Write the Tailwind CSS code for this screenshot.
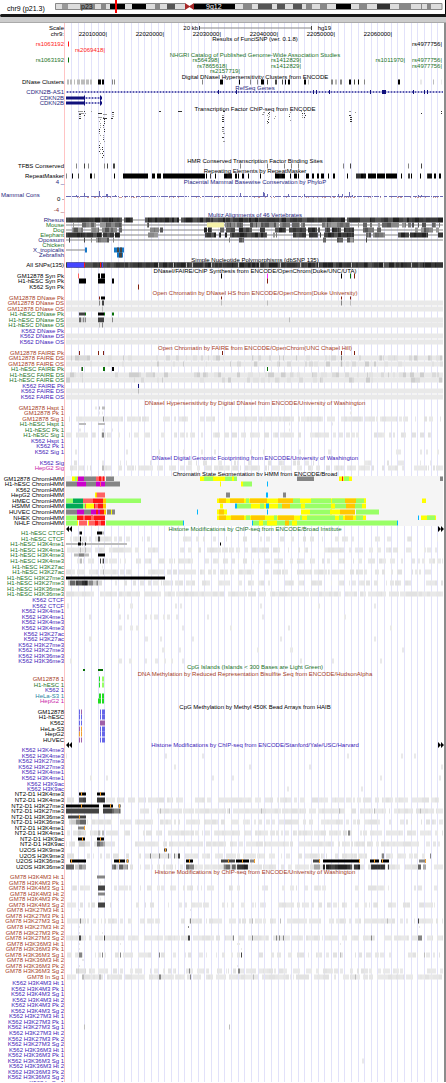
<!DOCTYPE html>
<html lang="en">
<head>
<meta charset="utf-8">
<meta name="viewport" content="width=device-width, initial-scale=1">
<title>chr9 (p21.3) genome browser</title>
<script src="https://cdn.jsdelivr.net/npm/@tailwindcss/browser@4"></script>
</head>
<body class="bg-white font-['Liberation_Sans',Arial,sans-serif] text-black">
<main class="overflow-clip">
  <header class="flex h-[14px] items-start border-r border-black pr-[2px] pl-[7px]">
    <h1 class="w-[48px] shrink-0 pt-[4px] text-[7px] leading-[9px] whitespace-nowrap">chr9 (p21.3)</h1>
    <svg id="ideogram" class="h-[14px] min-w-0 flex-1" viewBox="55 0 388 14" preserveAspectRatio="none" role="img" aria-label="Chromosome 9 ideogram"></svg>
  </header>
  <div class="h-[3px] rounded-l-full bg-[#181818]"></div>
  <div class="h-[6px] border-b border-[#aaaaaa] bg-[#cccccc]"></div>
  <div class="relative border-r-2 border-[#8c8c8c]">
    <svg id="grid" class="absolute inset-y-0 right-0 left-[64px] h-full w-[calc(100%-64px)]" viewBox="64 0 380 100" preserveAspectRatio="none" aria-hidden="true"></svg>
    <div id="tracks" class="relative pt-[2px]"></div>
  </div>
</main>
<script>
const colors = {
  k:'#000000', d:'#444444', m:'#858585', l:'#bcbcbc', g:'#e9e9e9', f:'#f5f5f5', n:'#10107c', b:'#4646ff',
  r:'#ff1515', s:'#ff6262', o:'#ffc800', y:'#ffff00', p:'#cc00cc', v:'#00aa55', w:'#99ff66', q:'#00b7ff',
  e:'#087008', t:'#802010', c:'#f0a030', u:'#6666e8', x:'#ff30ff', i:'#1478c8', h:'#22dd22', z:'#a060a8', j:'#f5f2a8'
};
const palettes = {
  A:['#222','#333','#444','#555','#3a3a3a'], B:['#555','#777','#888','#999','#666'],
  C:['#e9e9e9','#e6e6e6','#e9e9e9','#e2e2e2'], D:['#e2e2e2','#dadada','#cecece'],
  E:['#888','#aaa','#ccc','#666'], K:['#000','#111','#000','#333']
};
let seed = 9;
const rnd = () => (seed = (seed * 16807) % 2147483647) / 2147483647;
const rect = (x, y, w, h, c) => `<rect x="${x}" y="${y}" width="${w}" height="${h}" fill="${c}"/>`;

/* "k3:98-5" draws a 3px-high black box at x 98, 5 wide; "~C:66-440-60" scatters boxes over 60% of a span */
function marks(spec) {
  if (!spec) return '';
  return spec.split(' ').map(tok => {
    const [head, body] = tok.split(':');
    if (head[0] === '~') {
      const pal = palettes[head[1]], h = +(head[2] || 5);
      const [a, b, cov] = body.split('-').map(Number);
      let out = '', x = a;
      while (x < b) {
        const w = Math.min(1 + Math.floor(rnd() * 4), b - x);
        if (rnd() * 100 < cov) out += rect(x, 3 - h / 2, w, h, pal[Math.floor(rnd() * pal.length)]);
        x += w;
      }
      return out;
    }
    const h = +(head[1] || 5);
    return body.split(',').map(p => {
      const [x, w] = p.split('-').map(Number);
      return rect(x, 3 - h / 2, w || 1, h, colors[head[0]]);
    }).join('');
  }).join('');
}
function factors() {
  const cols = [[78,111,113,5],[79,114,118,2],[84,111,115,1],[90,111,112,1],[98,111,117,4],[99,117,153,1],[102,114,118,4],[103,117,144,1],[102,145,158,1],
    [111,112,118,2],[158,111,112,2],[177,111,112,4],[222,111,142,2],[262,112,115,2],[267,111,124,1],[268,112,122,1],[274,112,119,1],[289,112,124,1],
    [301,111,118,1],[304,111,118,1],[317,111,112,1],[349,111,122,2],[354,112,113,1],[420,111,113,1],[441,111,113,1]];
  let out = '';
  for (const [x, y0, y1, w] of cols)
    for (let y = y0; y <= y1; y += 2)
      if (rnd() < .85) out += rect(x + Math.floor(rnd() * 2), y - 109, w, 1, rnd() < .5 ? '#333' : '#999');
  return out;
}
function wiggle() {
  const peaks = {76:2,84:4,99:6,106:3,107:3,115:2,240:4,263:5,264:4,267:3,288:3,304:3,338:3,342:3,349:5,352:2,418:2,421:2};
  let out = '';
  for (let x = 66; x < 443; x++) {
    const up = peaks[x] || (rnd() < .8 ? 1 : 0);
    if (up) out += rect(x, 1 - up, 1, up, '#6a6ab4');
    if (rnd() < .18) out += rect(x, 1, 1, 1, '#cc9898');
  }
  return out;
}
function gene(a, b, boxes) {
  let out = rect(a, 2.5, b - a, 1, '#7c7cc8');
  for (let x = a + 1; x < b; x += 3) out += rect(x, 2, 1, 2, '#5c5cb0');
  return out + marks(boxes);
}

const K='text-black', G='text-[#1b7328]', R='text-[#a63c1c]', P='text-[#4020b8]', N='text-[#262680]', M='text-[#c81ca8]', T='text-[#1e82a0]', X='text-[#ff2020]';
const T_ = (y, color, title, o) => ({y, color, title, ...o});
const L_ = (y, color, label, m, o) => ({y, color, label, m, ...o});
const full = 'g:66-377';
const rows = [
 L_(28,K,'Scale','m1:199-112 d4:199-1,311-1',{pins:[[198,'20 kb',K],[331,'hg19',K]]}),
 L_(34,K,'chr9:','',{pins:[[107,'22010000|',K],[164,'22020000|',K],[221,'22030000|',K],[278,'22040000|',K],[335,'22050000|',K],[392,'22060000|',K]]}),
 T_(39,K,'Results of FunciSNP (ver. 0.1.8)'),
 L_(44,X,'rs1063192','r:68-1',{pins:[[442,'rs4977756|',K]]}),
 L_(50,X,'','',{pins:[[105,'rs2069418|',X]]}),
 T_(55,G,'NHGRI Catalog of Published Genome-Wide Association Studies'),
 L_(60,G,'rs1063192','e:68-1',{pins:[[219,'rs564398|',G],[301,'rs1412829|',G],[405,'rs1011970|',G],[442,'rs4977756|',G]]}),
 L_(66,G,'','',{pins:[[227,'rs7865618|',G],[301,'rs1412829|',G],[442,'rs4977756|',G]]}),
 L_(71,G,'','',{pins:[[240,'rs2157719|',G]]}),
 T_(77,K,'Digital DNaseI Hypersensitivity Clusters from ENCODE'),
 L_(82,K,'DNase Clusters','l:67-2,70-2,74-1,77-3,81-4,86-3,90-2 k:98-3,102-2 m:112-1,114-1,202-1 k:220-3,239-1 m:250-1,257-1 k:261-3 d:267-1,275-2,282-1 k:285-1,288-2,304-2 l:308-1 m:331-2 l:335-2 m:340-2 k:349-2 d:354-1 k:358-1 m:364-1 k:398-2 g:420-2 l:433-1 g:441-1'),
 T_(88,N,'RefSeq Genes'),
 {y:92,color:N,label:'CDKN2B-AS1',draw:()=>gene(66,443,'n4:218-1,236-1,313-1,316-1,329-1,370-1,382-4,413-1,424-1,427-1')},
 {y:98,color:N,label:'CDKN2B',draw:()=>gene(85,100,'n3:66-19 n5:84-1,100-1 n3:101-1')},
 {y:103,color:N,label:'CDKN2B',draw:()=>gene(85,100,'n3:66-19 n5:84-1,100-1 n3:101-1')},
 T_(109,K,'Transcription Factor ChIP-seq from ENCODE'),
 {y:112,color:K,label:'',draw:factors},
 T_(161,K,'HMR Conserved Transcription Factor Binding Sites'),
 L_(166,K,'TFBS Conserved','m:76-1 d:84-1 m:88-1,104-1 d:107-1,113-2 m:240-1,267-1,284-1,291-1,298-1,343-1 d:350-1 m:408-1 d:421-1'),
 T_(171,K,'Repeating Elements by RepeatMasker'),
 L_(176,K,'RepeatMasker','m:66-1 k:72-1 d:78-1 k:90-2,114-1,123-25 m:94-1 k:152-3,157-4,163-42,206-1 d:210-1 k:215-1 ~K:224-232-90 k:235-2,238-1,242-2,248-1,260-1 ~K:275-285-80 k:290-1,294-3,298-1,306-3,312-2,317-2,321-3,328-1,333-2,347-1 ~K:356-366-90 k:368-8,377-8,386-11,401-1 d:408-2 k:411-1,420-1 ~K:427-432-90 k:434-2,439-2'),
 T_(182,N,'Placental Mammal Basewise Conservation by PhyloP',{label:'4 _'}),
 {y:195,color:N,label:'Mammal Cons',left:true},
 {y:199,color:K,label:'0 -',draw:wiggle},
 {y:210,color:'text-[#903030]',label:'-4 _'},
 T_(215,N,'Multiz Alignments of 46 Vertebrates'),
 L_(220,N,'Rhesus','m1:66-377 ~A:66-133-97 ~A:145-443-98'),
 L_(225,G,'Mouse','m1:66-377 ~B:69-74-80 ~B:75-122-85 ~B:147-149-90 j:207-17 ~B:225-243-95 ~B:250-305-85 ~B:322-350-85 ~B:357-375-60 ~B:378-427-75 ~B:432-440-60'),
 L_(230,G,'Dog','m1:66-377 ~B:72-90-85 ~B:91-126-80 ~B:145-163-70 ~A:204-212-80 ~B:220-224-90 ~A:226-266-70 ~A:275-320-85 ~A:325-354-85 ~B:363-384-70 ~B:415-440-75'),
 L_(235,G,'Elephant','m1:66-377 ~A:66-120-90 ~B:148-162-75 ~A:205-268-85 ~B:270-277-90 ~A:282-321-85 ~A:324-354-90 ~B:366-385-70 ~A:398-428-75 ~A:438-443-80'),
 L_(240,N,'Opossum','m1:66-377 d:69-1,84-1 ~B:91-109-95 m:113-1,229-1 ~B:239-244-90 ~B:323-326-90 ~B:337-354-75 d:366-1'),
 L_(245,G,'Chicken',''),
 L_(250,N,'X_tropicalis','m1:66-19 i:85-2,114-10 d:117-2,120-2'),
 L_(255,N,'Zebrafish','i:117-6 d:119-3'),
 T_(260,K,'Simple Nucleotide Polymorphisms (dbSNP 135)'),
 L_(265,K,'All SNPs(135)','d:66-377 ~A:66-443-100 l:158-1,173-1,186-1,192-1,211-1,238-1,259-1,280-1,300-1,318-1,351-1,383-1,411-1 b:67-17 r:84-1,100-1 b:102-1'),
 T_(271,K,'DNaseI/FAIRE/ChIP Synthesis from ENCODE/OpenChrom(Duke/UNC/UTA)'),
 L_(276,K,'GM12878 Syn Pk','s:78-1 k:98-2,101-4,221-1 x:267-1 k:341-1 e:350-1 t:354-1'),
 L_(281,K,'H1-hESC Syn Pk','k:79-7,98-7,112-2 t:267-1'),
 L_(287,K,'K562 Syn Pk','t:138-1'),
 T_(293,R,'Open Chromatin by DNaseI HS from ENCODE/OpenChrom(Duke University)'),
 L_(298,R,'GM12878 DNase Pk','t3:99-1,221-1,341-1,350-1 k3:101-4'),
 L_(303,R,'GM12878 DNase DS',full+' m:99-1 d:102-2 l:221-1,267-1 m:341-1 l:350-1'),
 L_(309,R,'GM12878 DNase OS',full+' l:102-1'),
 L_(314,G,'H1-hESC DNase Pk','d3:79-6 e3:85-1 k3:98-6 e3:104-1 e3:112-2'),
 L_(320,G,'H1-hESC DNase DS',full+' ~E:79-86-100 d:98-6 m:112-1 l:289-1'),
 L_(325,G,'H1-hESC DNase OS',full+' l:99-1 m:102-1'),
 L_(331,P,'K562 DNase Pk',''),
 L_(336,P,'K562 DNase DS',full),
 L_(342,P,'K562 DNase OS',full),
 T_(348,R,'Open Chromatin by FAIRE from ENCODE/OpenChrom(UNC Chapel Hill)'),
 L_(353,R,'GM12878 FAIRE Pk','t4:79-1,98-1,103-1,222-1,341-1,354-1'),
 L_(358,R,'GM12878 FAIRE DS',full+' ~D:66-443-30 m:341-1'),
 L_(364,R,'GM12878 FAIRE OS',full+' ~D:66-443-15 l:341-1'),
 L_(369,G,'H1-hESC FAIRE Pk','m4:81-1 e4:82-1,103-2,267-1 k4:112-2'),
 L_(375,G,'H1-hESC FAIRE DS',full+' ~D:66-443-40'),
 L_(380,G,'H1-hESC FAIRE OS',full+' ~D:66-443-25'),
 L_(386,P,'K562 FAIRE Pk','n4:138-1'),
 L_(391,P,'K562 FAIRE DS',full+' l:138-1'),
 L_(397,P,'K562 FAIRE OS',full),
 T_(403,R,'DNaseI Hypersensitivity by Digital DNaseI from ENCODE/University of Washington'),
 L_(408,R,'GM12878 Hspt 1','g3:95-2 l3:99-1,102-3 g3:222-1,350-1'),
 L_(413,R,'GM12878 Pk 1','g3:99-1,102-1,350-2'),
 L_(419,R,'GM12878 Sig 1','~C:67-150-70 m:103-1 ~C:160-215-35 ~C:229-363-90 ~C:365-441-65'),
 L_(424,G,'H1-hESC Hspt 1','l2:79-7,98-7 g3:289-1,332-1'),
 L_(430,G,'H1-hESC Pk 1','g3:79-2,102-2,112-1,289-1'),
 L_(435,G,'H1-hESC Sig 1','~C:66-120-75 m:102-2 ~C:125-220-45 ~C:224-363-75 ~C:372-441-60'),
 L_(441,P,'K562 Hspt 1',''),
 L_(446,P,'K562 Pk 1',''),
 L_(452,P,'K562 Sig 1','g:75-2,126-2,158-2,183-2,201-2,214-2,250-2,263-2,299-2,328-3,396-5,420-2,426-2,437-2'),
 T_(458,P,'DNaseI Digital Genomic Footprinting from ENCODE/University of Washington'),
 L_(463,P,'K562 Sig','~C:70-200-12 ~C:200-440-25 g:102-2'),
 L_(468,M,'HepG2 Sig','~C:66-200-75 l:102-2 ~C:200-443-65'),
 T_(474,K,'Chromatin State Segmentation by HMM from ENCODE/Broad'),
 L_(479,K,'GM12878 ChromHMM','f6:66-377 y:72-3 w:75-2 o:77-1 p:78-6 m:84-12 s:96-9 r:99-2,103-1 m:106-8 y:200-14 w:204-9,225-12 y:213-12,232-2 m:297-17 y:339-13 r:342-1 w:344-5 m:440-3'),
 L_(484,K,'H1-hESC ChromHMM','f6:66-377 m:66-11,86-10 p:77-9 m:105-15 p:96-9 s:100-1 y:241-2 w:243-9 q:267-1 y:220-1'),
 L_(490,K,'K562 ChromHMM','f6:66-377'),
 L_(495,K,'HepG2 ChromHMM','f6:66-377 y:95-1 o:96-1 s:97-8 m:226-4 q:266-2 m:283-3'),
 L_(501,K,'HMEC ChromHMM','f6:66-377 w:66-7 v:73-10 s:83-10 r:93-10 o:103-3 w:106-35 y:217-149 o:219-7,230-14,250-17,278-15 w:246-3,293-7,311-20,332-13,356-8 o:345-11 y:364-2,422-4'),
 L_(506,K,'HSMM ChromHMM','f6:66-377 v:66-17 w:83-2 s:85-1 y:86-8 r:94-1 s:95-3 r:98-5 o:103-3 y:220-3 q:235-2 w:237-14 y:251-27 q:266-3 w:260-4 o:282-8 w:278-4,290-50 y:301-4,331-4 o:346-9 w:340-6,355-7 y:362-4'),
 L_(512,K,'HUVEC ChromHMM','f6:66-377 m:66-11 p:77-7 m:84-7 p:91-5 r:96-2 p:98-2 r:100-4 o:104-2 m:107-4 y:111-1 m:112-3 q:197-1 y:217-10 o:219-5 q:267-1 y:301-9 w:310-22 y:330-10 o:340-15 w:356-23'),
 L_(518,K,'NHEK ChromHMM','f6:66-377 w:66-11 r:77-6 s:83-2 r:85-8 s:91-3 r:94-11 y:217-149 o:219-7,231-13,251-14,278-16 w:246-4,274-3,300-2,307-28,339-4,356-7 o:345-8 q:418-1 y:421-15 w:427-8'),
 L_(523,K,'NHLF ChromHMM','f6:66-377 w:66-11 y:77-1 s:79-8 y:88-1 s:89-7 r:95-3 s:98-3 r:101-4 w:106-77 q:183-1,252-1 w:253-144 y:259-4,267-10,292-5 o:285-4 q:397-1'),
 T_(529,G,'Histone Modifications by ChIP-seq from ENCODE/Broad Institute',{arrows:true}),
 L_(533,G,'H1-hESC CTCF','m3:79-1 k3:80-2,97-5 l3:102-2'),
 L_(539,G,'H1-hESC CTCF','~C:66-130-65 k:80-1 d:98-2 ~C:131-443-25'),
 L_(544,G,'H1-hESC H3K4me1','l2:66-61 k3:78-3,85-1,220-1 m3:82-1'),
 L_(550,G,'H1-hESC H3K4me1','~C:66-125-65 l:80-1,85-1 ~C:125-443-45'),
 L_(555,G,'H1-hESC H3K4me3','l3:74-15 m3:79-5 k3:98-7'),
 L_(561,G,'H1-hESC H3K4me3','~C:66-128-55 l:80-2 d:100-1,103-1 l:102-1 ~C:130-443-45'),
 L_(567,G,'H1-hESC H3K27ac','g3:102-1'),
 L_(572,G,'H1-hESC H3K27ac','~C:66-130-75 l:103-1 ~C:130-443-55'),
 L_(578,G,'H1-hESC H3K27me3','k3:66-99'),
 L_(583,G,'H1-hESC H3K27me3','~E:66-76-90 ~A:76-88-100 ~E:88-98-95 ~D:98-112-60 ~C:115-443-50'),
 L_(589,G,'H1-hESC H3K36me3',''),
 L_(594,G,'H1-hESC H3K36me3','~C:66-443-85'),
 L_(600,P,'K562 CTCF',''),
 L_(606,P,'K562 CTCF','g:67-2,118-2,130-3,175-2,180-2,260-2,318-2,374-2'),
 L_(611,P,'K562 H3K4me1',''),
 L_(617,P,'K562 H3K4me1','g:89-2,119-2,127-2,145-2,150-2,154-4,163-2,167-3,176-2,207-2,262-2,344-2'),
 L_(622,P,'K562 H3K4me3',''),
 L_(628,P,'K562 H3K4me3','g:119-3,130-3,136-3,182-2,230-2,288-2,390-2'),
 L_(634,P,'K562 H3K27ac',''),
 L_(639,P,'K562 H3K27ac','g:89-3,145-3,160-2,192-2,280-2,374-2'),
 L_(645,P,'K562 H3K27me3',''),
 L_(650,P,'K562 H3K27me3','g:162-3,179-2,257-2,290-3,402-2'),
 L_(656,P,'K562 H3K36me3',''),
 L_(661,P,'K562 H3K36me3','g:70-2,118-4,129-3,145-2,155-3,164-2,171-2,182-2,300-2,332-2,380-2'),
 T_(667,G,'CpG Islands (Islands < 300 Bases are Light Green)'),
 L_(670,G,'','e2:83-2,98-5'),
 T_(674,R,'DNA Methylation by Reduced Representation Bisulfite Seq from ENCODE/HudsonAlpha'),
 L_(679,R,'GM12878 1','h:99-1 w:102-2'),
 L_(685,G,'H1-hESC 1','h:99-1 w:102-2'),
 L_(690,P,'K562 1',''),
 L_(696,T,'HeLa-S3 1','h:99-2,102-2'),
 L_(701,M,'HepG2 1','h:98-3,102-2'),
 T_(707,K,'CpG Methylation by Methyl 450K Bead Arrays from HAIB'),
 L_(712,K,'GM12878','u:79-1,100-1,102-3 z:81-1'),
 L_(717,K,'H1-hESC','u:79-1,81-1,100-1,102-3'),
 L_(723,K,'K562','u:79-1,81-1 z:100-5'),
 L_(729,K,'HeLa-S3','z:79-1 c:81-1 u:100-1,102-3'),
 L_(734,K,'HepG2','c:79-1,81-1 u:100-1,102-3'),
 L_(740,K,'HUVEC','z:79-1,81-1 u:100-1,102-3'),
 T_(745,P,'Histone Modifications by ChIP-seq from ENCODE/Stanford/Yale/USC/Harvard',{arrows:true}),
 L_(750,P,'K562 H3K4me3',''),
 L_(756,P,'K562 H3K4me3','g:66-1,165-2,202-2,347-2,401-2,414-2'),
 L_(761,P,'K562 H3K27me3',''),
 L_(767,P,'K562 H3K27me3','g:174-2,249-2,309-2,441-2'),
 L_(772,P,'K562 H3K4me1',''),
 L_(778,P,'K562 H3K4me1','g:90-2,106-2,212-2,232-2,380-2,439-2'),
 L_(784,P,'K562 H3K9ac',''),
 L_(789,P,'K562 H3K9ac','g:287-2,361-2'),
 L_(794,K,'NT2-D1 H3K4me3','k3:79-7,97-8 c4:81-1,100-1'),
 L_(800,K,'NT2-D1 H3K4me3','~C:66-78-70 ~A:79-86-100 ~A:97-105-100 ~C:106-443-80'),
 L_(806,K,'NT2-D1 H3K27me3','k3:66-33,103-10 c4:81-1,110-1 m3:118-3 c4:119-1'),
 L_(811,K,'NT2-D1 H3K27me3','d:66-33,103-9 ~E:112-121-95 ~C:140-443-85 l:160-1,229-1,261-1,339-1,374-1,420-1'),
 L_(817,K,'NT2-D1 H3K36me3','d3:68-18 c4:79-1'),
 L_(822,K,'NT2-D1 H3K36me3','~D:67-76-80 ~E:76-86-95 ~C:86-443-65'),
 L_(828,K,'NT2-D1 H3K4me1','m3:78-7 c4:84-1'),
 L_(833,K,'NT2-D1 H3K4me1','~C:66-130-65 ~D:78-86-80 l:98-2,102-2 ~C:143-443-75 m:348-2'),
 L_(839,K,'NT2-D1 H3K9ac','k3:78-7,97-7 c4:82-1,100-1'),
 L_(844,K,'NT2-D1 H3K9ac','~C:66-130-50 ~E:79-85-95 ~E:97-105-95 ~C:135-443-80'),
 L_(850,K,'U2OS H3K9me3','d3:164-3 c4:165-1'),
 L_(856,K,'U2OS H3K9me3','~C:67-145-35 ~C:145-180-80 m:150-1,159-1,168-1,174-1 d:178-2 ~C:181-370-65 ~D:381-390-80 m:382-2 ~C:390-425-60 m:430-1'),
 L_(861,K,'U2OS H3K36me3','k3:70-16,114-11,186-7,236-13,323-37,370-9,381-8 d3:221-14,313-7 m3:126-3,250-5,419-7 c4:71-1,119-1,127-1,189-1,228-1,242-1,254-1,319-1,359-1,374-1,382-1,425-1'),
 L_(867,K,'U2OS H3K36me3','~E:66-86-85 ~E:112-130-85 ~C:130-443-75 ~E:186-194-95 ~E:223-236-85 ~A:237-248-100 ~E:310-320-90 ~A:323-360-92 ~A:371-389-90 ~E:418-426-90'),
 T_(872,R,'Histone Modifications by ChIP-seq from ENCODE/University of Washington'),
];
const gm = ['m3:97-8','g3:100-1,104-1','~C:72-95-45 d:98-7 ~C:106-443-35','m3:98-7','g3:100-1,104-1','~C:67-95-40 d:98-7 ~C:106-443-35',
 'g2:79-1,190-1','','~C:67-145-70 m:80-1 ~C:147-443-60 m:190-1 l:252-1,280-1,387-1 d:418-1','g2:79-1,419-1 m2:188-1','g2:79-1,102-1',
 '~C:66-126-80 d:79-2,104-1 ~C:128-443-75 d:188-2 m:233-1,252-1,276-1,279-1,283-1,371-1,418-4','g2:79-1,120-1,237-3,340-1','g2:79-1,241-1',
 '~C:67-130-60 m:79-3,102-1,120-1,159-1 ~C:130-443-40 d:241-1 l:340-1,424-1','g2:82-2','g2:79-1,237-1','~D:76-88-80 ~C:89-443-55 m:189-1,238-2','~C:67-443-70 l:82-2,99-2 m:159-2,190-1 l:253-1,355-1'];
const names = [];
for (const h of ['H3K4M3','H3K27M3','H3K36M3']) for (const n of [1,2]) for (const k of ['Ht','Pk','Sg']) names.push(`${h} ${k} ${n}`);
names.push('In Sg 1');
const step = 50 / 9;
names.forEach((n, i) => rows.push(L_(Math.round(877 + i * step), R, 'GM78 ' + n, gm[i])));
names.forEach((n, i) => rows.push(L_(Math.round(983 + i * step), P, 'K562 ' + n, i === 8 ? 'l:84-1,229-1' : i === 14 ? 'g:362-2' : '')));

const chevron = (side, d) => `<button type="button" aria-label="${side}" class="flex h-[6px] w-[6px] items-center"><svg class="h-[6px] w-[6px]" viewBox="0 0 6 6"><path d="${d}" fill="#000"/></svg></button>`;
const host = document.getElementById('tracks');
host.innerHTML = rows.map((r, i) => {
  const h = (rows[i + 1] ? rows[i + 1].y : 1085) - r.y;
  const svg = r.m || r.draw ? `<svg class="block h-[6px] w-full overflow-visible" viewBox="66 0 378 6" preserveAspectRatio="none" aria-hidden="true">${r.draw ? r.draw() : marks(r.m)}</svg>` : '';
  const pins = (r.pins || []).map(([x, t, c]) => `<span class="absolute top-0 whitespace-nowrap ${c}" style="right:${(444 - x) / 3.78}%">${t}</span>`).join('');
  const title = r.title ? `<h2 class="flex-1 text-center whitespace-nowrap">${r.title.replace('<', '&lt;')}</h2>` : '';
  const body = r.arrows
    ? `<div class="flex justify-between">${chevron('Previous', 'M3 0V6L0 3ZM6 0V6L3 3Z')}${title}${chevron('Next', 'M0 0V6L3 3ZM3 0V6L6 3Z')}</div>`
    : title;
  return `<section class="flex text-[6px] leading-[6px] ${r.color}" style="height:${h}px">
    <div class="w-[66px] shrink-0 pr-[2px] pl-[1px] whitespace-nowrap ${r.left ? 'text-left' : 'text-right'}">${r.label || ''}</div>
    <div class="relative min-w-0 flex-1">${svg}${pins}${body}</div></section>`;
}).join('');

let lines = rect(64, 0, 1, 100, '#ffc4c4');
for (let i = 0; i < 56; i++) lines += rect(Math.round(71 + i * 6.663), 0, 1, 100, '#e2e2fa');
document.getElementById('grid').innerHTML = lines;

const bands = [[55,'#ddd'],[62,'#999'],[68,'#ddd'],[80,'#888'],[95,'#ddd'],[101,'#888'],[106,'#ddd'],[110,'#000'],[125,'#ddd'],[132,'#000'],[146,'#ddd'],[155,'#888'],[160,'#ddd'],[167,'#555'],[175,'#ddd'],[185,'#fff'],[194,'#000'],[235,'#ddd'],[243,'#888'],[252,'#ddd'],[258,'#555'],[272,'#ddd'],[277,'#555'],[285,'#ddd'],[293,'#555'],[302,'#ddd'],[306,'#888'],[312,'#ddd'],[320,'#888'],[327,'#ddd'],[336,'#000'],[351,'#ddd'],[359,'#888'],[367,'#ddd'],[377,'#333'],[390,'#ddd'],[399,'#888'],[411,'#ddd'],[421,'#888'],[422,'#ddd'],[427,'#888'],[431,'#ddd'],[442,'']];
let ideo = '';
for (let i = 0; i < bands.length - 1; i++) ideo += rect(bands[i][0], 3, bands[i + 1][0] - bands[i][0], 7, bands[i][1]);
ideo += `<path d="M55.5 3.5H185M194 3.5H442V9.5H194M185 9.5H55.5V3.5" fill="none" stroke="#888"/><path d="M185 3L189.500 6L194 3V10L189.500 7L185 10Z" fill="#a82828"/>
<text x="81" y="9" font-size="7" fill="#111">p23</text><text x="206" y="9" font-size="7" fill="#fff">9q12</text>` + rect(115, 0, 2, 13, '#ff0000');
document.getElementById('ideogram').innerHTML = ideo;
</script>
</body>
</html>
